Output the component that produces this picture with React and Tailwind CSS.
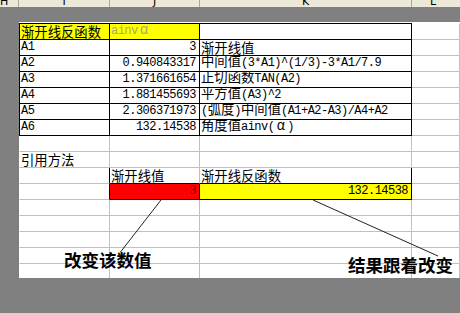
import React from 'react';

const cjk = "font-['Noto_Sans_CJK_SC',sans-serif]";

const M = ({ children }) => (
  <span className="font-['Liberation_Mono','Noto_Sans_CJK_SC',monospace] text-[12px] tracking-[-0.53px]">{children}</span>
);

const Alpha = () => <span className="inline-block w-[13px] text-center">α</span>;

// one row = 4 cells (I, J, K, L)
// r / b: black right / bottom border, otherwise light grid line
const tableRow = (a, b, c) => [
  { t: a, r: true, b: true, l: true },
  { t: b, r: true, b: true, right: true },
  { t: c, r: true, b: true },
  {},
];

const rows = [
  [
    { t: '渐开线反函数', bg: 'yellow', r: true, b: true, l: true },
    {
      t: (
        <span className="text-[#a8a878]">
          <M>ainv</M>
          <Alpha />
        </span>
      ),
      bg: 'yellow',
      r: true,
      b: true,
    },
    { t: '', r: true, b: true },
    {},
  ],
  tableRow(<M>A1</M>, <M>3</M>, '渐开线值'),
  tableRow(<M>A2</M>, <M>0.940843317</M>, <>中间值<M>(3*A1)^(1/3)-3*A1/7.9</M></>),
  tableRow(<M>A3</M>, <M>1.371661654</M>, <>正切函数<M>TAN(A2)</M></>),
  tableRow(<M>A4</M>, <M>1.881455693</M>, <>平方值<M>(A3)^2</M></>),
  tableRow(<M>A5</M>, <M>2.306371973</M>, <><M>(</M>弧度<M>)</M>中间值<M>(A1+A2-A3)/A4+A2</M></>),
  tableRow(<M>A6</M>, <M>132.14538</M>, <>角度值<M>ainv(</M><Alpha /><M>)</M></>),
  [{}, {}, {}, {}],
  [{ t: '引用方法' }, {}, {}, {}],
  [{ r: true }, { t: '渐开线值', b: true }, { t: '渐开线反函数', b: true, r: true }, {}],
  [
    { r: true },
    { t: <M>3</M>, bg: 'red', right: true, r: true, b: true, color: 'red' },
    { t: <M>132.14538</M>, bg: 'yellow', right: true, r: true, b: true },
    {},
  ],
  [{}, {}, {}, {}],
  [{}, {}, {}, {}],
  [{}, {}, {}, {}],
  [{}, {}, {}, {}],
  [{}, {}, {}, {}],
];

const widths = ['w-[91px]', 'w-[90px]', 'w-[212px]', 'w-[48px]'];

function Cell({ c, col, first }) {
  const cls = [
    widths[col],
    'shrink-0 overflow-hidden whitespace-nowrap border-r border-b leading-[15px] text-[13.33px] flex items-end',
    first ? 'h-[17px] border-t' : 'h-[16px]',
    first && col < 3 ? 'border-t-black' : 'border-t-white',
    col === 0 ? 'border-l' : '',
    c.l ? 'border-l-black' : 'border-l-white',
    c.r ? 'border-r-black' : 'border-r-[#c0c0c0]',
    c.b ? 'border-b-black' : 'border-b-[#c0c0c0]',
    c.bg === 'yellow' ? 'bg-[#ffff00]' : c.bg === 'red' ? 'bg-[#ff0000]' : 'bg-white',
    c.color === 'red' ? 'text-[#900000]' : 'text-black',
    c.right ? 'justify-end pr-[3px]' : 'justify-start pl-[1px]',
  ].join(' ');
  return (
    <div className={cls}>
      <span className="leading-[15px]">{c.t}</span>
    </div>
  );
}

export default function App() {
  return (
    <div className={`relative w-[460px] h-[313px] bg-[#808080] overflow-hidden ${cjk}`}>
      <div className="flex h-[7px] bg-[#ece9d8] overflow-hidden font-['DejaVu_Sans',sans-serif] text-[11px] text-black">
        <div className="w-[19px] shrink-0 border-r border-[#aca899]">
          <div className="leading-[11px] mt-[-4px]">H</div>
        </div>
        <div className="w-[91px] shrink-0 border-r border-[#aca899] text-center">
          <div className="leading-[11px] mt-[-4px]">I</div>
        </div>
        <div className="w-[90px] shrink-0 border-r border-[#aca899] text-center">
          <div className="leading-[11px] mt-[-4px]">J</div>
        </div>
        <div className="w-[212px] shrink-0 border-r border-[#aca899] text-center">
          <div className="leading-[11px] mt-[-4px]">K</div>
        </div>
        <div className="flex-1 pl-[18px]">
          <div className="leading-[11px] mt-[-4px]">L</div>
        </div>
      </div>

      <div className="flex mt-[15px]">
        <div className="w-[19px] shrink-0" />
        <div className="w-[441px] h-[256px] bg-white overflow-hidden pt-[1px]">
          {rows.map((row, i) => (
            <div key={i} className="flex">
              {row.map((c, j) => (
                <Cell key={j} c={c} col={j} first={i === 0} />
              ))}
            </div>
          ))}
        </div>
      </div>

      <svg className="absolute left-0 top-0 pointer-events-none" width="460" height="313">
        <line x1="161" y1="200" x2="120.5" y2="252" stroke="#222" strokeWidth="1" />
        <line x1="313" y1="200" x2="438" y2="256" stroke="#222" strokeWidth="1" />
      </svg>

      <div className="absolute left-[64px] top-[251px] text-[17.5px] leading-none font-bold text-black">
        改变该数值
      </div>
      <div className="absolute left-[348px] top-[256px] text-[17.5px] leading-none font-bold text-black">
        结果跟着改变
      </div>
    </div>
  );
}
